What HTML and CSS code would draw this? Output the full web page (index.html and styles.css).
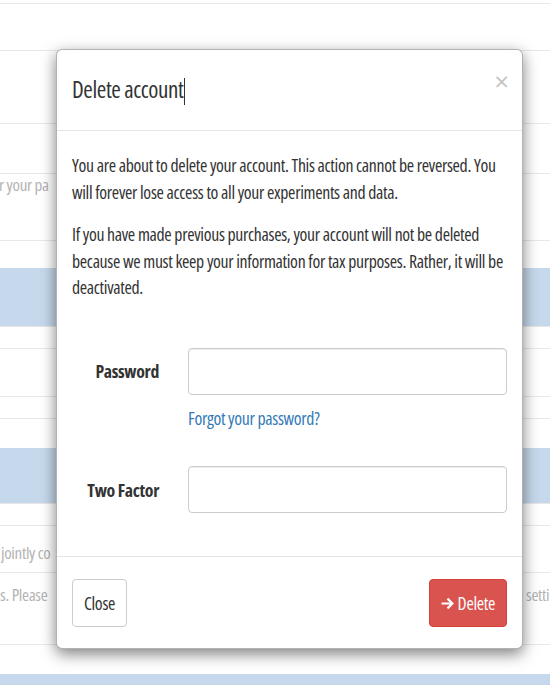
FILE: index.html
```html
<!DOCTYPE html>
<html lang="en">
<head>
    <meta charset="UTF-8">
    <meta name="viewport" content="width=device-width, initial-scale=1.0">
    <title>Delete account</title>
    <link rel="stylesheet" href="styles.css">
</head>
<body>
    <!-- settings page behind the modal -->
    <div class="page">
        <div></div>
        <div class="row"></div>
        <div class="row"></div>
        <div class="row"></div>
        <div class="row"><span class="bg-text lead-in">r your pa</span></div>
        <div class="row"></div>
        <div class="row band"></div>
        <div class="row"></div>
        <div class="row"></div>
        <div class="row"></div>
        <div class="row"></div>
        <div class="row band"></div>
        <div class="row"></div>
        <div class="row text-row"><span class="bg-text">jointly co</span></div>
        <div class="row text-row2">
            <span class="bg-text">s. Please</span>
            <span class="bg-text tail">settin</span>
        </div>
        <div class="row"></div>
        <div class="row band"></div>
    </div>

    <div class="modal-content">
        <div class="modal-header">
            <h4 class="modal-title">Delete account<span class="caret"></span></h4>
            <button class="close" type="button">&times;</button>
        </div>

        <div class="modal-body">
            <p>You are about to delete your account. This action cannot be reversed. You will forever lose access to all your experiments and data.</p>
            <p>If you have made previous purchases, your account will not be deleted because we must keep your information for tax purposes. Rather, it will be deactivated.</p>

            <form class="delete-form">
                <div class="form-group">
                    <label for="password">Password</label>
                    <input type="password" id="password">
                    <a href="#" class="help-link">Forgot your password?</a>
                </div>
                <div class="form-group">
                    <label for="twofactor">Two Factor</label>
                    <input type="text" id="twofactor">
                </div>
            </form>
        </div>

        <div class="modal-footer">
            <button class="btn btn-default" type="button">Close</button>
            <button class="btn btn-danger" type="button">
                <svg class="arrow" width="13" height="13" viewBox="0 0 12 12"><path d="M0.5 6H10.5M6 1.5L10.5 6L6 10.5" fill="none" stroke="#fff" stroke-width="2"/></svg>Delete
            </button>
        </div>
    </div>
</body>
</html>
```
FILE: styles.css
```css
* {
    box-sizing: border-box;
}
body {
    margin: 0;
    height: 685px;
    overflow: hidden;
    position: relative;
    background-color: #fff;
    font-family: "Open Sans", sans-serif;
    font-stretch: 75%;
    letter-spacing: -0.32px;
    color: #333;
}
/* Background page */
.page {
    display: grid;
    grid-template-rows: 3px 47px 73px 50px 67px 28px 58px 22px 48px 22px 30px 55px 22px 47px 72px 30px 1fr;
    height: 685px;
}
.row {
    border-top: 1px solid #e8e8e8;
    white-space: nowrap;
}
.band {
    background-color: #c6d9ec;
    border-top-color: #c6d9ec;
}
.bg-text {
    font-size: 17px;
    line-height: 18px;
    color: #b3b3b3;
}
.lead-in {
    display: inline-block;
    margin-left: -1px;
}
.text-row {
    padding-top: 16px;
    padding-left: 1px;
}
.text-row2 {
    display: flex;
    padding-top: 13px;
}
.tail {
    margin-left: auto;
    width: 24px;
    overflow: hidden;
}
/* Modal */
.modal-content {
    position: absolute;
    top: 49px;
    left: 56px;
    width: 467px;
    background-color: #fff;
    border: 1px solid rgba(0, 0, 0, 0.3);
    border-radius: 6px;
    box-shadow: 0 5px 15px rgba(0, 0, 0, 0.5);
}
.modal-header {
    display: flex;
    align-items: flex-start;
    padding: 23px 15px 24px;
    border-bottom: 1px solid #e5e5e5;
}
.modal-title {
    flex: 1;
    margin: 0;
    font-size: 23px;
    font-weight: 400;
    line-height: 33px;
    letter-spacing: -0.4px;
}
.caret {
    display: inline-block;
    width: 0;
    height: 27px;
    margin-left: 1px;
    border-left: 1.5px solid #333;
    vertical-align: middle;
}
.close {
    margin: -5px -2px 0 0;
    padding: 0;
    background: none;
    border: none;
    font-family: inherit;
    font-size: 26px;
    line-height: 1;
    color: #c4c4c4;
    cursor: pointer;
}
.modal-body {
    padding: 21px 15px 43px;
}
.modal-body p {
    margin: 0 0 16px;
    font-size: 17.8px;
    line-height: 26.5px;
}
.delete-form {
    padding-top: 31px;
}
.form-group {
    display: grid;
    grid-template-columns: 87px 1fr;
    column-gap: 29px;
    align-items: center;
    margin-bottom: 35px;
}
.form-group:last-child {
    margin-bottom: 0;
}
.form-group label {
    text-align: right;
    font-size: 17.8px;
    font-weight: 700;
}
.form-group input {
    height: 47px;
    padding: 6px 12px;
    font-family: inherit;
    font-size: 17.8px;
    border: 1px solid #ccc;
    border-radius: 4px;
    box-shadow: inset 0 1px 1px rgba(0, 0, 0, 0.075);
}
.help-link {
    grid-column: 2;
    margin-top: 10px;
    font-size: 17.8px;
    line-height: 26.5px;
    color: #337ab7;
    text-decoration: none;
}
.modal-footer {
    display: flex;
    justify-content: space-between;
    padding: 22px 15px 21px;
    border-top: 1px solid #e5e5e5;
}
.btn {
    display: flex;
    align-items: center;
    height: 48px;
    padding: 0 11px;
    font-family: inherit;
    font-stretch: 75%;
    font-size: 17.8px;
    letter-spacing: -0.32px;
    border: 1px solid;
    border-radius: 4px;
    cursor: pointer;
}
.btn-default {
    color: #333;
    background-color: #fff;
    border-color: #ccc;
}
.btn-danger {
    color: #fff;
    background-color: #d9534f;
    border-color: #d43f3a;
}
.arrow {
    margin-right: 4px;
}
```
